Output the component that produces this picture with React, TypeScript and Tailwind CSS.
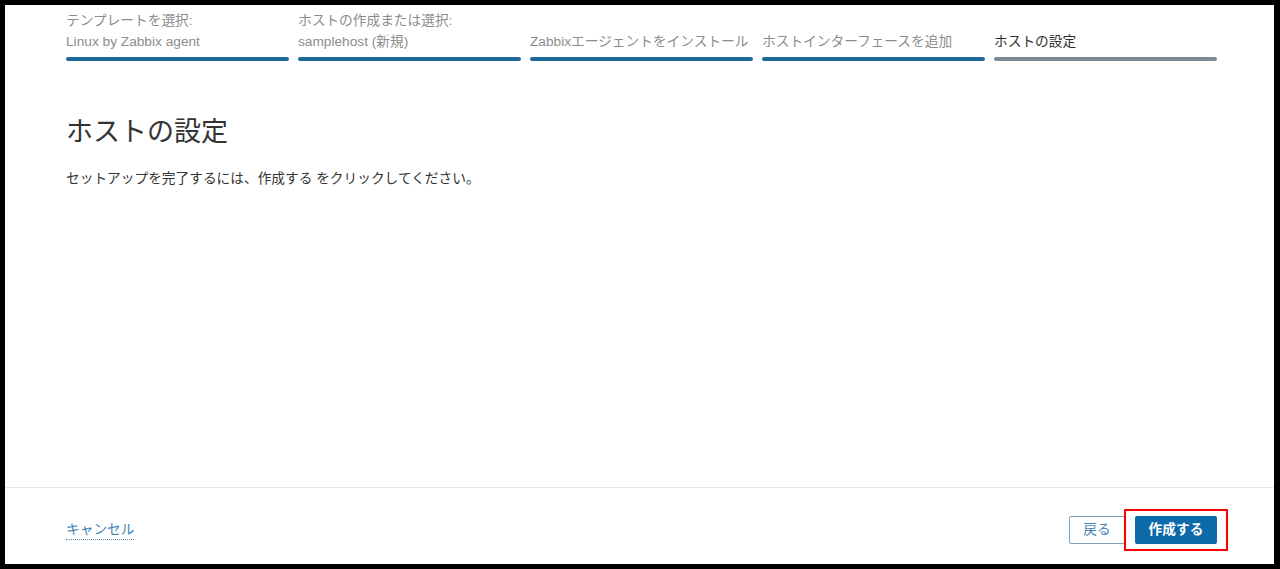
const font = { fontFamily: '"Liberation Sans", "Noto Sans CJK JP", sans-serif' }

interface Step {
  title?: string
  value: string
  done: boolean
}

const steps: Step[] = [
  { title: 'テンプレートを選択:', value: 'Linux by Zabbix agent', done: true },
  { title: 'ホストの作成または選択:', value: 'samplehost (新規)', done: true },
  { value: 'Zabbixエージェントをインストール', done: true },
  { value: 'ホストインターフェースを追加', done: true },
  { value: 'ホストの設定', done: false },
]

export default function App() {
  return (
    <div className="w-[1280px] h-[569px] bg-black pt-[5px] pl-[5px] pr-[6px] pb-[5px]" style={font}>
      <div className="w-full h-full bg-white flex flex-col">
        {/* ステップ */}
        <div className="flex gap-[9px] pl-[61px] pr-[57px] pt-[5px]">
          {steps.map((s) => (
            <div key={s.value} className="flex-1 flex flex-col">
              <div className="h-[42px] flex flex-col justify-end text-[13.7px] leading-[21px]">
                {s.title && <div className="text-[#8c8c8c]">{s.title}</div>}
                <div className={s.done ? 'text-[#8c8c8c]' : 'text-[#2e2e2e]'}>{s.value}</div>
              </div>
              <div
                className={`mt-[5px] h-[4px] rounded-full ${s.done ? 'bg-[#1c6a9c]' : 'bg-[#7d8a93]'}`}
              />
            </div>
          ))}
        </div>

        {/* 本文 */}
        <div className="flex-1 pl-[61px] pt-[54px]">
          <h1 className="text-[27px] leading-[34px] text-[#333333]">ホストの設定</h1>
          <p className="mt-[20px] text-[13.7px] leading-[20px] text-[#333333]">
            セットアップを完了するには、作成する をクリックしてください。
          </p>
        </div>

        {/* フッター */}
        <div className="h-[77px] border-t border-[#e6e6e6] flex items-center justify-between pl-[61px] pr-[57px] pt-[8px]">
          <span className="text-[13.7px] text-[#3f7fb0] border-b border-dotted border-[#6a8fae] leading-[18px]">
            キャンセル
          </span>
          <div className="flex gap-[10px] items-center">
            <button className="w-[56px] h-[28px] border border-[#7aa3c2] rounded-[2px] text-[13.7px] text-[#4a80ab] bg-white">
              戻る
            </button>
            <div className="relative">
              <button className="w-[82px] h-[28px] rounded-[2px] bg-[#0d6aa8] text-white text-[13.7px] font-bold">
                作成する
              </button>
              <div className="absolute -left-[11px] -right-[11px] -top-[7px] -bottom-[7px] border-2 border-[#ff0000]" />
            </div>
          </div>
        </div>
      </div>
    </div>
  )
}
